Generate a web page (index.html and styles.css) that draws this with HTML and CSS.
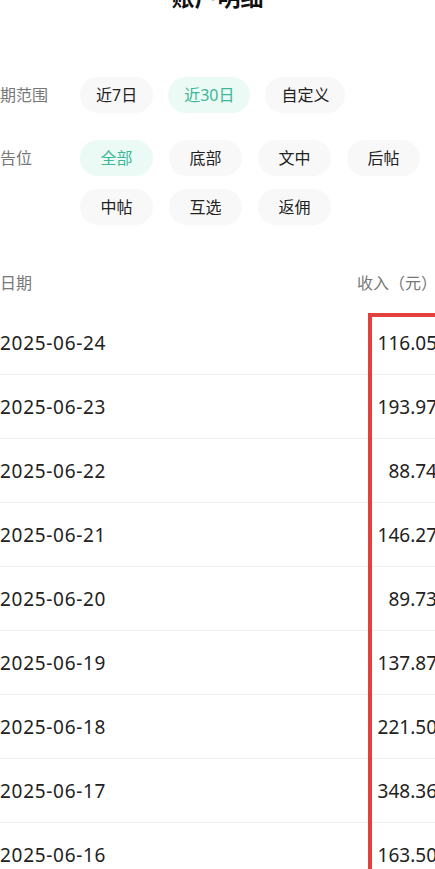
FILE: index.html
```html
<!DOCTYPE html>
<html lang="zh-CN">
<head>
<meta charset="utf-8">
<title>账户明细</title>
<link rel="stylesheet" href="styles.css">
</head>
<body>
<header class="title">账户明细</header>
<main class="page">
  <section class="filters">
    <div class="filter-row first">
      <span class="label">日期范围</span>
      <div class="chips flex">
        <span class="chip">近7日</span>
        <span class="chip active">近30日</span>
        <span class="chip">自定义</span>
      </div>
    </div>
    <div class="filter-row">
      <span class="label">广告位</span>
      <div class="chips grid">
        <span class="chip active">全部</span>
        <span class="chip">底部</span>
        <span class="chip">文中</span>
        <span class="chip">后帖</span>
        <span class="chip">中帖</span>
        <span class="chip">互选</span>
        <span class="chip">返佣</span>
      </div>
    </div>
  </section>
  <section class="table">
    <div class="thead"><span>日期</span><span>收入（元）</span></div>
    <div class="row"><span>2025-06-24</span><span class="num">116.05</span></div>
    <div class="row"><span>2025-06-23</span><span class="num">193.97</span></div>
    <div class="row"><span>2025-06-22</span><span class="num">88.74</span></div>
    <div class="row"><span>2025-06-21</span><span class="num">146.27</span></div>
    <div class="row"><span>2025-06-20</span><span class="num">89.73</span></div>
    <div class="row"><span>2025-06-19</span><span class="num">137.87</span></div>
    <div class="row"><span>2025-06-18</span><span class="num">221.50</span></div>
    <div class="row"><span>2025-06-17</span><span class="num">348.36</span></div>
    <div class="row"><span>2025-06-16</span><span class="num">163.50</span></div>
    <div class="highlight"></div>
  </section>
</main>
</body>
</html>
```

FILE: styles.css
```css
html, body {
  margin: 0;
  padding: 0;
  background: #ffffff;
  overflow: hidden;
}
body {
  width: 435px;
  height: 869px;
  font-family: "Noto Sans", "Noto Sans CJK SC", sans-serif;
  color: #222222;
}
.title {
  margin-top: -17px;
  height: 28px;
  line-height: 28px;
  text-align: center;
  font-size: 23px;
  font-weight: 700;
  color: #111111;
}
.page {
  width: 453px;
  margin-left: -16px;
}
.filters {
  margin-top: 66px;
  display: flex;
  flex-direction: column;
  gap: 27px;
}
.filter-row {
  display: flex;
  align-items: flex-start;
}
.label {
  width: 96px;
  flex: none;
  font-size: 16px;
  line-height: 36px;
  color: #777777;
}
.chips.flex {
  display: flex;
  gap: 15px;
}
.chips.grid {
  display: grid;
  grid-template-columns: repeat(4, 73px);
  column-gap: 16px;
  row-gap: 13px;
}
.chip {
  height: 36px;
  min-width: 73px;
  box-sizing: border-box;
  padding: 0 16px;
  border-radius: 18px;
  background: #f8f8f8;
  font-size: 16px;
  line-height: 36px;
  text-align: center;
  color: #222222;
}
.chip.active {
  background: #ebfaf5;
  color: #3db797;
}
.table {
  position: relative;
  margin-top: 27px;
}
.thead {
  height: 59px;
  display: flex;
  justify-content: space-between;
  align-items: center;
  padding-left: 16px;
  font-size: 16px;
  color: #777777;
}
.row {
  height: 64px;
  box-sizing: border-box;
  border-bottom: 1px solid #efefef;
  display: flex;
  justify-content: space-between;
  align-items: center;
  padding-left: 16px;
  font-size: 19px;
  letter-spacing: 0.7px;
  color: #222222;
}
.num {
  letter-spacing: 0;
}
.highlight {
  position: absolute;
  left: 384px;
  top: 61px;
  right: -20px;
  bottom: -40px;
  border: 4px solid #e2413f;
}
```
